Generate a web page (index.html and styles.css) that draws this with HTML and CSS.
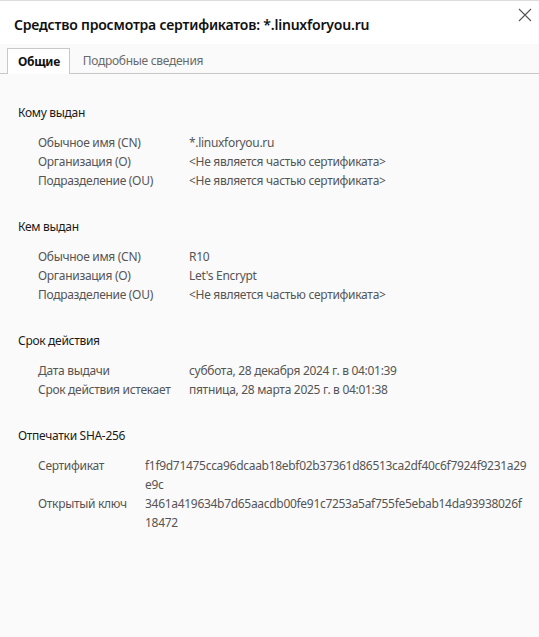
FILE: index.html
```html
<!DOCTYPE html>
<html>
<head>
    <meta charset="utf-8">
    <title>Средство просмотра сертификатов</title>
    <link rel="stylesheet" href="styles.css">
</head>
<body>
    <div class="dialog">
        <header class="dialog-head">
            <h1 class="dialog-title">Средство просмотра сертификатов: *.linuxforyou.ru</h1>
            <button type="button" class="close-btn" aria-label="Закрыть">
                <svg width="14" height="14" viewBox="0 0 14 14"><path d="M1 1L13 13M13 1L1 13" stroke="#555" stroke-width="1.1" fill="none"/></svg>
            </button>
        </header>
        <nav class="tabs">
            <span class="tab tab-active">Общие</span>
            <span class="tab">Подробные сведения</span>
        </nav>
        <article class="content">
            <section class="group">
                <h2 class="group-title">Кому выдан</h2>
                <div class="rows">
                    <span class="label">Обычное имя (CN)</span><span class="value">*.linuxforyou.ru</span>
                    <span class="label">Организация (O)</span><span class="value">&lt;Не является частью сертификата&gt;</span>
                    <span class="label">Подразделение (OU)</span><span class="value">&lt;Не является частью сертификата&gt;</span>
                </div>
            </section>
            <section class="group">
                <h2 class="group-title">Кем выдан</h2>
                <div class="rows">
                    <span class="label">Обычное имя (CN)</span><span class="value">R10</span>
                    <span class="label">Организация (O)</span><span class="value">Let's Encrypt</span>
                    <span class="label">Подразделение (OU)</span><span class="value">&lt;Не является частью сертификата&gt;</span>
                </div>
            </section>
            <section class="group">
                <h2 class="group-title">Срок действия</h2>
                <div class="rows">
                    <span class="label">Дата выдачи</span><span class="value">суббота, 28 декабря 2024 г. в 04:01:39</span>
                    <span class="label">Срок действия истекает</span><span class="value">пятница, 28 марта 2025 г. в 04:01:38</span>
                </div>
            </section>
            <section class="group">
                <h2 class="group-title">Отпечатки SHA-256</h2>
                <div class="rows rows-hash">
                    <span class="label">Сертификат</span><span class="value">f1f9d71475cca96dcaab18ebf02b37361d86513ca2df40c6f7924f9231a29<br>e9c</span>
                    <span class="label">Открытый ключ</span><span class="value">3461a419634b7d65aacdb00fe91c7253a5af755fe5ebab14da93938026f<br>18472</span>
                </div>
            </section>
        </article>
    </div>
</body>
</html>
```
FILE: styles.css
```css
html, body {
    margin: 0;
    padding: 0;
}
body {
    font-family: "Noto Sans", "Open Sans", sans-serif;
    font-size: 12px;
    letter-spacing: -0.3px;
    color: #555;
    background: #fafafa;
}
.dialog {
    width: 539px;
    height: 637px;
    box-sizing: border-box;
    border-top: 1px solid #dcdcdc;
    background: #fafafa;
}

/* header */
.dialog-head {
    position: relative;
    height: 43px;
    background: #fff;
    box-sizing: border-box;
    padding: 14px 0 0 14px;
}
.dialog-title {
    margin: 0;
    font-size: 14px;
    line-height: 20px;
    font-weight: 600;
    letter-spacing: -0.2px;
    color: #111;
}
.close-btn {
    position: absolute;
    top: 7px;
    right: 7px;
    width: 14px;
    height: 14px;
    padding: 0;
    border: 0;
    background: none;
}

/* tabs */
.tabs {
    display: flex;
    height: 30px;
    box-sizing: border-box;
    padding: 4px 0 0 7px;
    border-bottom: 1px solid #c8c8c8;
}
.tab {
    display: flex;
    align-items: center;
    height: 25px;
    padding: 0 12px 0 13px;
    color: #6a6a6a;
    line-height: 19px;
}
.tab-active {
    height: 26px;
    padding: 0 9px 0 10px;
    box-sizing: border-box;
    border: 1px solid #c8c8c8;
    border-bottom: 0;
    background: #fff;
    color: #111;
    font-weight: 700;
    margin-bottom: -1px;
}

/* content */
.content {
    padding: 29px 0 0 18px;
}
.group {
    margin-bottom: 27px;
}
.group-title {
    margin: 0;
    font-size: 12px;
    font-weight: 400;
    line-height: 19px;
    color: #1a1a1a;
}
.rows {
    display: grid;
    grid-template-columns: 151px 1fr;
    padding: 11px 0 0 20px;
    line-height: 19px;
}
.rows-hash {
    grid-template-columns: 107px 1fr;
}
```
